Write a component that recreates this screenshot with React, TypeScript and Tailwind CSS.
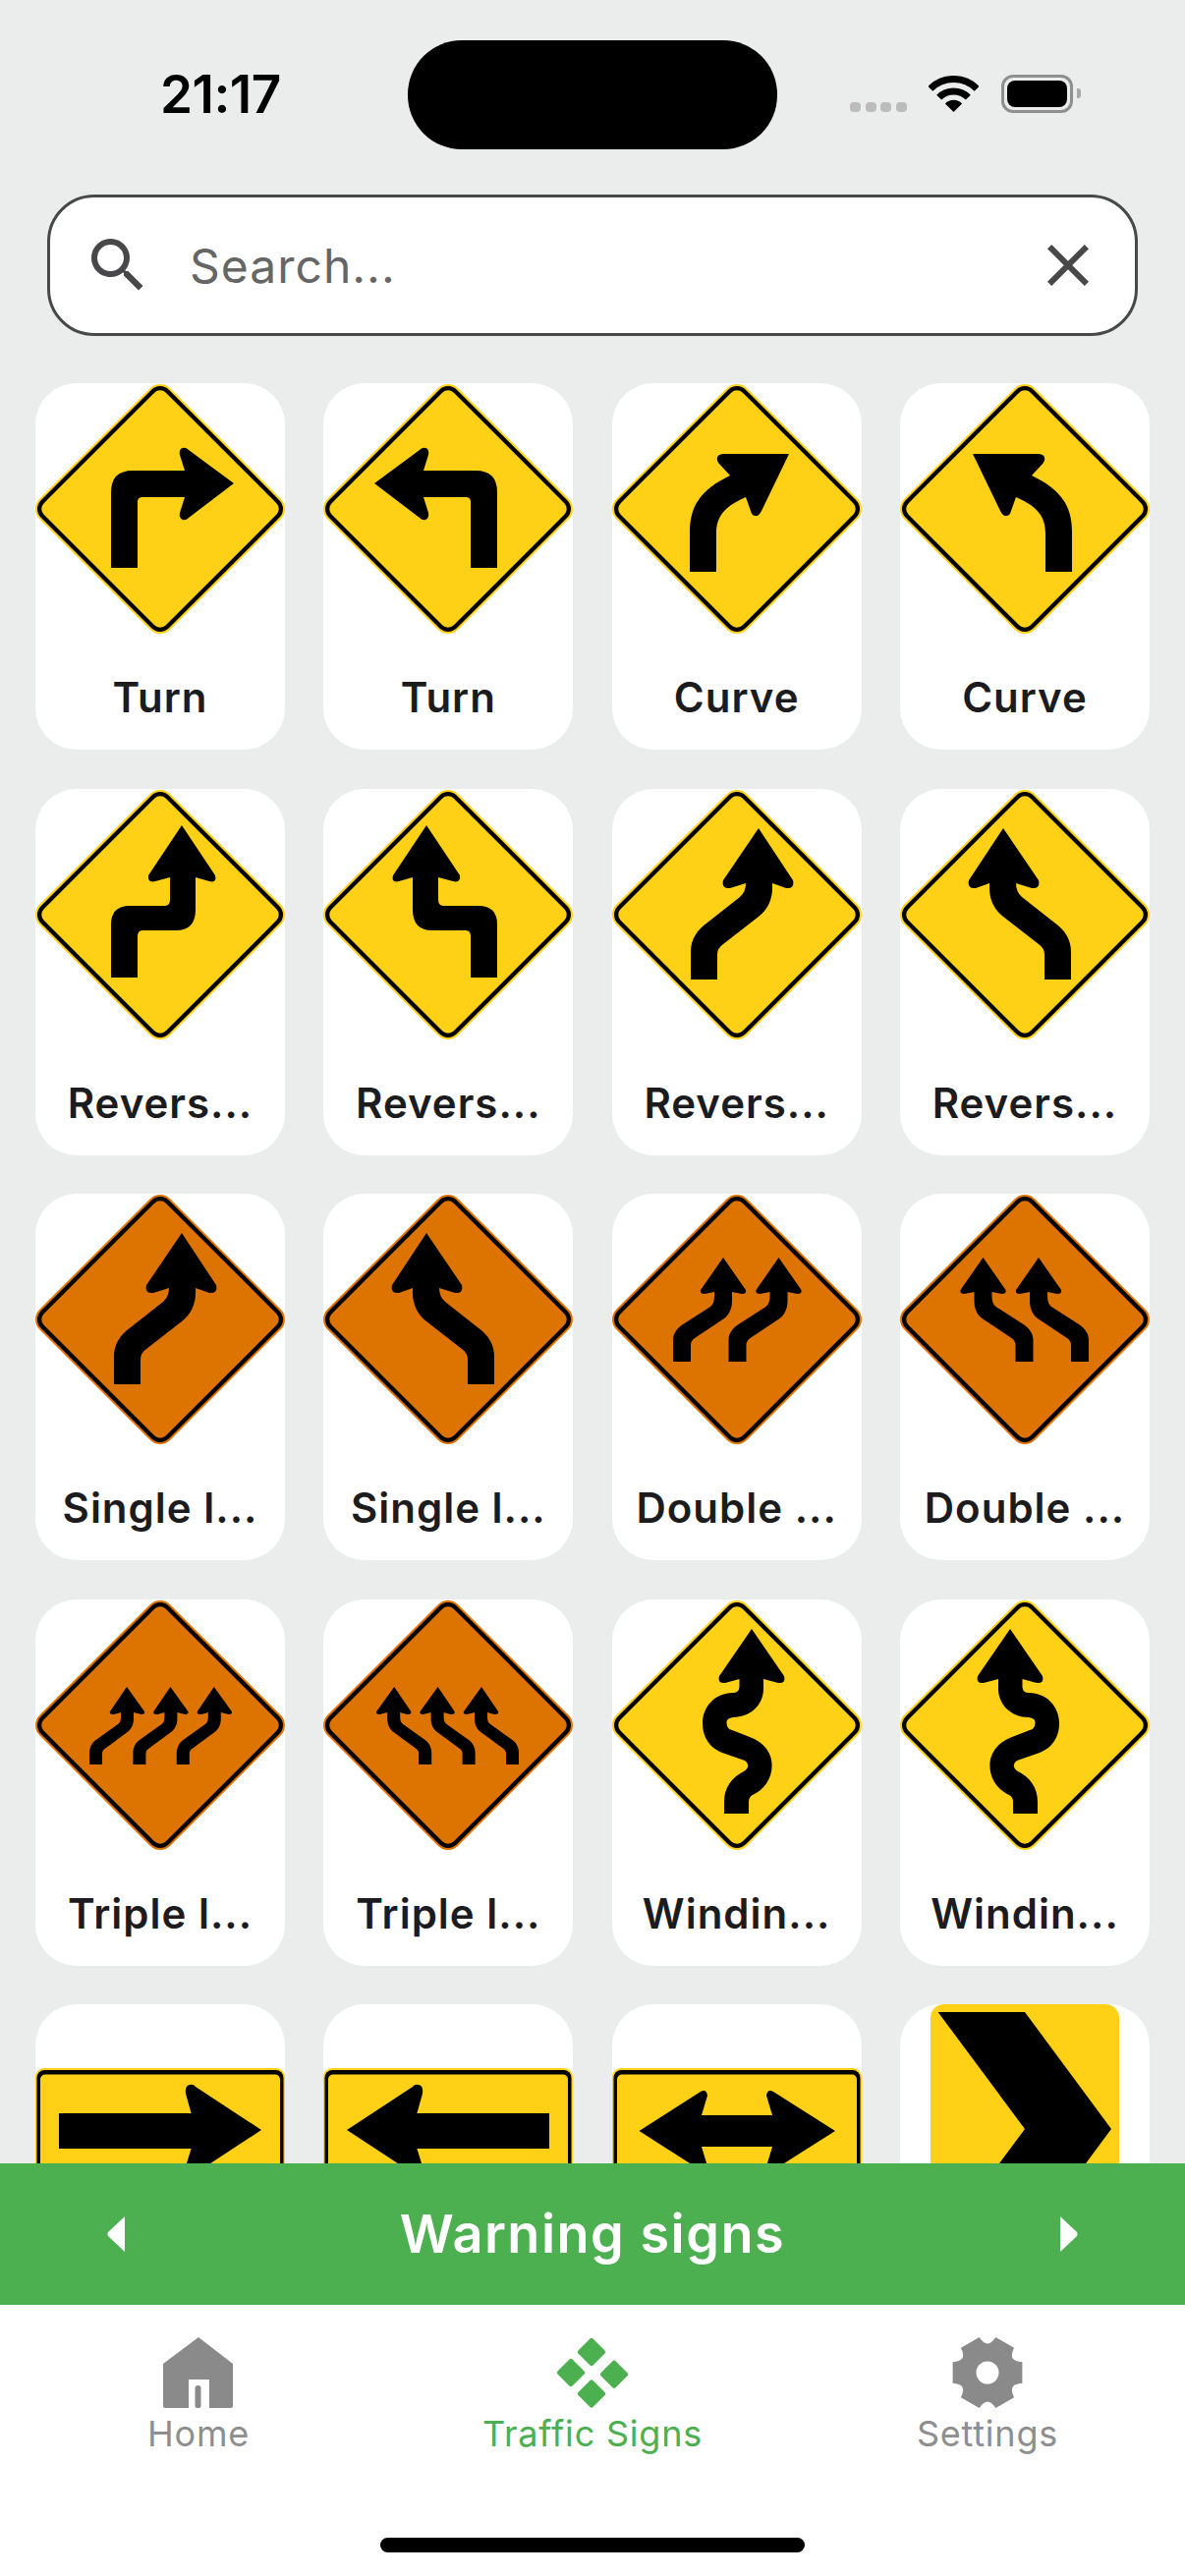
import React from "react";

const YELLOW = "#fed116";
const ORANGE = "#dd7300";

const TURN = "M77 187V110Q77 88 99 88H152L147 72Q146 66 150 65Q153 64 156 67L202 101L156 136Q153 139 150 138Q146 136 147 131L152 115H109Q104 115 104 120V187Z";
const CURVE = "M79 191V150C79 120 95 105 120 93L108 80Q104 72 113 71H180L152 129Q149 135 146 134Q142 134 141 129L136 115C118 123 106 132 106 152V191Z";
const REVERSE_TURN = "M77 191V137Q77 118 96 118H131Q137 118 137 112V89L122 93Q114 95 115 87L149 36L183 87Q185 95 177 93L163 89V122Q163 143 143 143H109Q104 143 104 149V191Z";
const REVERSE_CURVE = "M80 193V165C80 152 86 143 97 135L130 109Q136 104 136 95L120 100Q111 101 113 92L149 39L184 92Q186 101 177 100L163 95V100C163 112 158 122 149 129L113 157Q107 161 107 168V193Z";
const DOUBLE = "M62 170V148C62 141 66 136 72 132L100 114Q104 111 104 103V99L94 101Q89 101 90 97L113 64L136 97Q137 101 132 101L122 99V108C122 116 119 122 114 126L84 146Q80 149 80 153V170Z";
const TRIPLE = "M55 167V155C55 149 58 144 63 141L84 126Q87 124 87 119V114L80 116Q75 116 76 113L93 88L111 113Q112 116 108 116L100 114V120C100 126 98 130 95 133L72 150Q68 152 68 156V167Z";
const WINDING = "M114 217V205C114 190 122 180 134 174Q139 171 138 167Q137 163 132 162L112 155C99 150 92 139 92 125C92 108 105 94 123 94Q129 94 129.5 88V80L115 84Q107 85 109 77L142 29L175 77Q177 85 169 84L154 80V90C154 106 141 119 123 119Q116 120 116.5 125Q117 131 122 132L140 139C154 144 162.6 155 162.6 168C162.6 182 154 193 143 198Q139 200 139 205V217Z";
const ARROW = "M24 110H158.6L153 90Q152 82 157 81Q161 80 163 83L230 127L163 171Q161 174 157 173Q152 172 153 164L158.6 146H24Z";
const BOTH = "M27.5 128L90 88Q96 85 97 92L91 112H163L157 92Q158 85 164 88L227 128L164 168Q158 171 157 164L163 144H91L97 164Q96 171 90 168Z";

type Glyph = { d: string; dx?: number };

function Diamond({ color, glyphs, mirror }: { color: string; glyphs: Glyph[]; mirror?: boolean }) {
  const pts = "127,14.5 239.5,127 127,239.5 14.5,127";
  return (
    <svg viewBox="0 0 254 254" className="block w-[254px] h-[254px]">
      <polygon points={pts} fill={color} stroke={color} strokeWidth={29} strokeLinejoin="round" />
      <polygon points={pts} fill="#000" stroke="#000" strokeWidth={25} strokeLinejoin="round" />
      <polygon points={pts} fill={color} stroke={color} strokeWidth={16.5} strokeLinejoin="round" />
      <g transform={mirror ? "translate(254 0) scale(-1 1)" : undefined}>
        {glyphs.map((g, i) => (
          <path key={i} d={g.d} transform={g.dx ? `translate(${g.dx} 0)` : undefined} fill="#000" />
        ))}
      </g>
    </svg>
  );
}

function RectSign({ d, mirror }: { d: string; mirror?: boolean }) {
  return (
    <svg viewBox="0 0 254 254" className="block w-[254px] h-[254px]">
      <rect x="0" y="64" width="254" height="126" rx="9" fill={YELLOW} />
      <rect x="1.5" y="66" width="251" height="122" rx="8" fill="#000" />
      <rect x="5" y="70.5" width="244" height="113" rx="5" fill={YELLOW} />
      <path d={d} fill="#000" transform={mirror ? "translate(254 0) scale(-1 1)" : undefined} />
    </svg>
  );
}

function Chevron() {
  return (
    <svg viewBox="0 0 254 254" className="block w-[254px] h-[254px]">
      <rect x="31" y="0" width="192" height="254" rx="14" fill={YELLOW} />
      <polygon points="38.6,8 127,8 215,127 127,246 38.6,246 127,127" fill="#000" />
    </svg>
  );
}

function Card({ label, children, top = true }: { label?: string; children: React.ReactNode; top?: boolean }) {
  return (
    <div className="w-[254px] h-[373px] rounded-[42px] bg-white flex flex-col items-center overflow-hidden">
      <div className={top ? "mt-[1px]" : ""}>{children}</div>
      {label && (
        <div className="mt-[40px] text-[42px] leading-[50px] font-semibold tracking-[1px] text-[#1c1c1e] whitespace-nowrap text-center">
          {label}
        </div>
      )}
    </div>
  );
}

const d = (g: string, dx2?: number, dx3?: number): Glyph[] => {
  const out: Glyph[] = [{ d: g }];
  if (dx2) out.push({ d: g, dx: dx2 });
  if (dx3) out.push({ d: g, dx: dx3 });
  return out;
};

const signs = [
  { label: "Turn", color: YELLOW, glyphs: d(TURN) },
  { label: "Turn", color: YELLOW, glyphs: d(TURN), mirror: true },
  { label: "Curve", color: YELLOW, glyphs: d(CURVE) },
  { label: "Curve", color: YELLOW, glyphs: d(CURVE), mirror: true },
  { label: "Revers...", color: YELLOW, glyphs: d(REVERSE_TURN) },
  { label: "Revers...", color: YELLOW, glyphs: d(REVERSE_TURN), mirror: true },
  { label: "Revers...", color: YELLOW, glyphs: d(REVERSE_CURVE) },
  { label: "Revers...", color: YELLOW, glyphs: d(REVERSE_CURVE), mirror: true },
  { label: "Single l...", color: ORANGE, glyphs: d(REVERSE_CURVE) },
  { label: "Single l...", color: ORANGE, glyphs: d(REVERSE_CURVE), mirror: true },
  { label: "Double ...", color: ORANGE, glyphs: d(DOUBLE, 56.5) },
  { label: "Double ...", color: ORANGE, glyphs: d(DOUBLE, 56.5), mirror: true },
  { label: "Triple l...", color: ORANGE, glyphs: d(TRIPLE, 44.4, 88.8) },
  { label: "Triple l...", color: ORANGE, glyphs: d(TRIPLE, 44.4, 88.8), mirror: true },
  { label: "Windin...", color: YELLOW, glyphs: d(WINDING) },
  { label: "Windin...", color: YELLOW, glyphs: d(WINDING), mirror: true },
];

function gearPath() {
  const cx = 37;
  const cy = 36;
  const p = (r: number, deg: number) => {
    const a = (deg * Math.PI) / 180;
    return `${(cx + r * Math.cos(a)).toFixed(2)} ${(cy + r * Math.sin(a)).toFixed(2)}`;
  };
  let s = `M${p(37, -17)}`;
  for (let k = 0; k < 6; k++) {
    const c = k * 60;
    s += `L${p(37, c + 17)}Q${p(30, c + 22)} ${p(29.5, c + 30)}Q${p(30, c + 38)} ${p(37, c + 43)}`;
  }
  return s + "Z";
}

function Rhomb({ x, y }: { x: number; y: number }) {
  const r = 11.5;
  return (
    <polygon
      points={`${x},${y - r} ${x + r},${y} ${x},${y + r} ${x - r},${y}`}
      fill="#4caf50"
      stroke="#4caf50"
      strokeWidth={5}
      strokeLinejoin="round"
    />
  );
}

export default function App() {
  return (
    <div className="w-[1206px] h-[2622px] bg-[#ebedec] flex flex-col overflow-hidden font-['Inter',sans-serif]">
      {/* Status bar */}
      <div className="h-[198px] shrink-0 flex items-start">
        <div className="ml-[163px] mt-[64px] w-[121px] text-[53px] leading-[64px] font-semibold text-black text-center whitespace-nowrap tracking-[-0.5px]">
          21:17
        </div>
        <div className="ml-[131px] mt-[41px] w-[376px] h-[111px] rounded-[55px] bg-black" />
        <div className="ml-[74px] mt-[104px] flex gap-[4.5px]">
          <div className="w-[11px] h-[10px] rounded-[4px] bg-[#bcbcbc]" />
          <div className="w-[11px] h-[10px] rounded-[4px] bg-[#bcbcbc]" />
          <div className="w-[11px] h-[10px] rounded-[4px] bg-[#bcbcbc]" />
          <div className="w-[11px] h-[10px] rounded-[4px] bg-[#bcbcbc]" />
        </div>
        <svg viewBox="0 0 51 37" className="ml-[22px] mt-[77px] w-[51px] h-[37px]" fill="none">
          <path d="M1.8 13.3A33.5 33.5 0 0 1 49.2 13.3" stroke="#000" strokeWidth={7} />
          <path d="M10.65 22.15A21 21 0 0 1 40.35 22.15" stroke="#000" strokeWidth={7} />
          <path d="M25.5 37L16.9 28.4A12 12 0 0 1 34.1 28.4Z" fill="#000" />
        </svg>
        <div className="ml-[23px] mt-[76px] w-[73px] h-[39px] rounded-[12px] border-[3px] border-[#8f8f8f] p-[3px]">
          <div className="w-full h-full rounded-[8px] bg-black" />
        </div>
        <div className="ml-[4px] mt-[90px] w-[4px] h-[10px] rounded-r-[3px] bg-[#a8a8a8]" />
      </div>

      {/* Search */}
      <div className="shrink-0 mx-[48px] h-[144px] rounded-[48px] border-[3px] border-[#48484a] bg-white flex items-center pl-[33px] pr-[32px]">
        <svg viewBox="0 0 24 24" className="w-[72px] h-[72px] shrink-0" fill="#48484a">
          <path d="M15.5 14h-.79l-.28-.27C15.41 12.59 16 11.11 16 9.5 16 5.91 13.09 3 9.5 3S3 5.91 3 9.5 5.91 16 9.5 16c1.61 0 3.09-.59 4.23-1.57l.27.28v.79l5 4.99L20.49 19l-4.99-5zm-6 0C7.01 14 5 11.99 5 9.5S7.01 5 9.5 5 14 7.01 14 9.5 11.99 14 9.5 14z" />
        </svg>
        <div className="ml-[37px] mt-[2px] flex-1 text-[48px] leading-[58px] text-[#666666] tracking-[1px]">Search...</div>
        <svg viewBox="0 0 24 24" className="w-[72px] h-[72px] shrink-0" fill="#48484a">
          <path d="M19 6.41L17.59 5 12 10.59 6.41 5 5 6.41 10.59 12 5 17.59 6.41 19 12 13.41 17.59 19 19 17.59 13.41 12z" />
        </svg>
      </div>

      {/* Grid */}
      <div className="flex-1 min-h-0 overflow-hidden pt-[48px] px-[36px]">
        <div className="grid grid-cols-[repeat(4,254px)] justify-between gap-y-[39.5px]">
          {signs.map((s, i) => (
            <Card key={i} label={s.label}>
              <Diamond color={s.color} glyphs={s.glyphs} mirror={s.mirror} />
            </Card>
          ))}
          <Card>
            <RectSign d={ARROW} />
          </Card>
          <Card>
            <RectSign d={ARROW} mirror />
          </Card>
          <Card>
            <RectSign d={BOTH} />
          </Card>
          <Card top={false}>
            <Chevron />
          </Card>
        </div>
      </div>

      {/* Category bar */}
      <div className="shrink-0 h-[144px] bg-[#4caf50] flex items-center justify-between px-[109px]">
        <svg viewBox="0 0 18 36" className="w-[18px] h-[36px]">
          <path d="M18 0V36L1 20Q0 18 1 16Z" fill="#fff" />
        </svg>
        <div className="text-[54px] leading-[64px] font-semibold text-white tracking-[1.5px]">Warning signs</div>
        <svg viewBox="0 0 18 36" className="w-[18px] h-[36px]">
          <path d="M0 0V36L17 20Q18 18 17 16Z" fill="#fff" />
        </svg>
      </div>

      {/* Tab bar */}
      <div className="shrink-0 h-[276px] bg-white flex flex-col">
        <div className="grid grid-cols-3 pt-[33px]">
          <div className="flex flex-col items-center pl-[2px]">
            <svg viewBox="0 0 72 72" className="w-[72px] h-[72px]">
              <path
                fillRule="evenodd"
                d="M36 0L71 27V70Q71 72 69 72H47V43H26V72H2Q0 72 0 70V27Z"
                fill="#8a8a8a"
              />
              <path d="M32.5 72V52Q32.5 49 35.5 49Q38.5 49 38.5 52V70Q38.5 72 35.5 72Q32.5 72 32.5 70Z" fill="#8a8a8a" />
            </svg>
            <div className="mt-[4px] text-[36px] leading-[44px] text-[#8e8e8e] tracking-[0.8px]">Home</div>
          </div>
          <div className="flex flex-col items-center">
            <svg viewBox="0 0 74 72" className="w-[74px] h-[72px]">
              <Rhomb x={36} y={15} />
              <Rhomb x={15} y={36} />
              <Rhomb x={59} y={37.7} />
              <Rhomb x={36} y={57.5} />
            </svg>
            <div className="mt-[4px] text-[36px] leading-[44px] text-[#4caf50] tracking-[0.8px]">Traffic Signs</div>
          </div>
          <div className="flex flex-col items-center">
            <svg viewBox="0 0 74 72" className="w-[74px] h-[72px]">
              <path fillRule="evenodd" d={`${gearPath()}M37 24.5A11.5 11.5 0 1 0 37 47.5A11.5 11.5 0 1 0 37 24.5Z`} fill="#8a8a8a" />
            </svg>
            <div className="mt-[4px] text-[36px] leading-[44px] text-[#8e8e8e] tracking-[0.8px]">Settings</div>
          </div>
        </div>
        <div className="mt-[84px] mx-auto w-[432px] h-[15px] rounded-[8px] bg-black" />
      </div>
    </div>
  );
}
